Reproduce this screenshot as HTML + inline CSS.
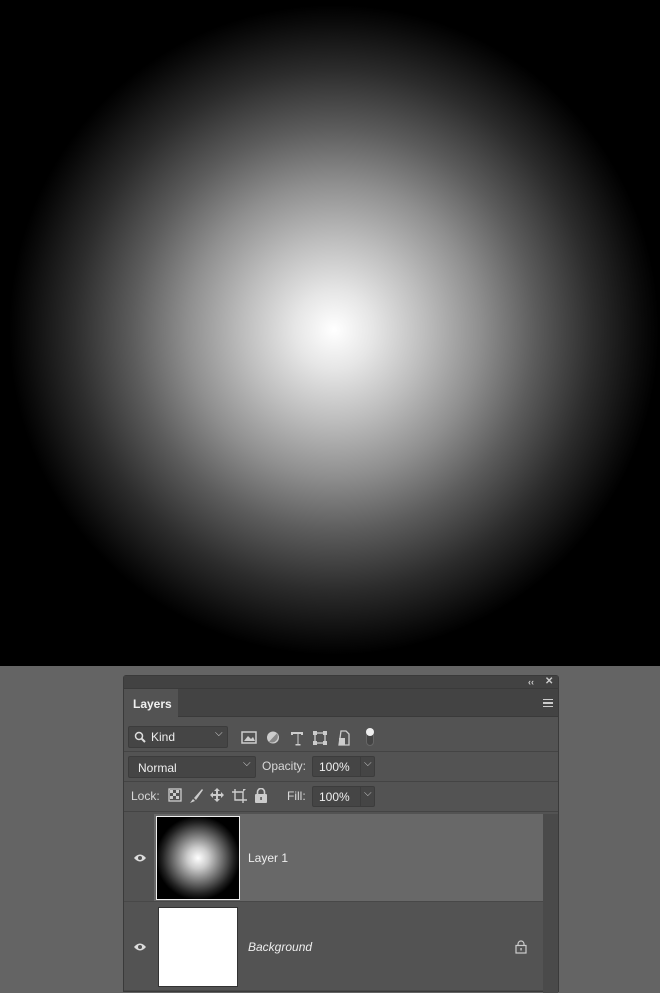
<!DOCTYPE html>
<html><head><meta charset="utf-8"><style>
*{margin:0;padding:0;box-sizing:border-box}
body{width:660px;height:992px;overflow:hidden;background:#646464;font-family:"Liberation Sans",sans-serif;position:relative}
#canvas{position:absolute;left:0;top:0;width:660px;height:666px;background:radial-gradient(circle 325px at 334px 330px,#fff 0,#e6e6e6 12%,#bdbdbd 28%,#8f8f8f 45%,#5c5c5c 62%,#2c2c2c 80%,#0a0a0a 95%,#000 100%)}
#panel{position:absolute;left:123px;top:675px;width:436px;height:317px;background:#535353;border:1px solid #3a3a3a;border-radius:3px 3px 0 0}
.abs{position:absolute}
#top{left:0;top:0;width:434px;height:13px;background:#424242;border-bottom:1px solid #3a3a3a}
#tabrow{left:0;top:13px;width:434px;height:28px;background:#434343;border-bottom:1px solid #3a3a3a}
#tab{left:0;top:13px;width:54px;height:29px;background:#535353;color:#f0f0f0;font-weight:bold;font-size:12px;padding:8px 0 0 9px}
.box{background:#454545;border:1px solid #3c3c3c;border-radius:2px;color:#eee;font-size:12px}
.lbl{color:#d8d8d8;font-size:12px}
.sep{left:0;width:434px;height:1px;background:#444}
.ic{fill:#d0d0d0}
</style></head><body>
<div id="canvas"></div>
<div id="panel">
 <div class="abs" id="top"></div>
 <div class="abs" style="left:404px;top:1px;color:#ccc;font-size:9px;font-weight:bold">‹‹</div>
 <div class="abs" style="left:421px;top:0px;color:#ccc;font-size:10px;font-weight:bold">✕</div>
 <div class="abs" id="tabrow"></div>
 <div class="abs" id="tab">Layers</div>
 <div class="abs" style="left:419px;top:23px;width:10px;height:8px;border-top:1px solid #ccc;border-bottom:1px solid #ccc"><div style="margin-top:2px;border-top:1px solid #ccc;height:2px;border-bottom:1px solid #ccc"></div></div>

 <div class="abs box" style="left:4px;top:50px;width:100px;height:22px;padding:3px 0 0 22px">Kind</div>
 <svg class="abs" style="left:10px;top:55px" width="12" height="12"><circle cx="5" cy="5" r="3.5" stroke="#ddd" stroke-width="1.5" fill="none"/><path d="M7.5 7.5L11 11" stroke="#ddd" stroke-width="2"/></svg>
 <div class="abs lbl" style="left:91px;top:52px;font-size:10px">⌵</div>
 <svg class="abs" style="left:117px;top:53px" width="140" height="20">
  <rect x="1" y="3" width="14" height="11" fill="none" stroke="#ccc" stroke-width="1.5"/><path d="M3 12l4-5 3 3 2-2 2 4z" fill="#ccc"/>
  <circle cx="32" cy="8.5" r="6" fill="#ccc"/><path d="M36 4.3A6 6 0 0 1 28 12.7z" fill="#888"/>
  <path d="M50 3h12v3h-2v-1h-2.5v10h2v1.5h-5V15h2V5H52v1h-2z" fill="#ccc"/>
  <rect x="74" y="4" width="10" height="10" fill="none" stroke="#ccc" stroke-width="1.3"/><rect x="72" y="2" width="4" height="4" fill="#ccc"/><rect x="82" y="2" width="4" height="4" fill="#ccc"/><rect x="72" y="12" width="4" height="4" fill="#ccc"/><rect x="82" y="12" width="4" height="4" fill="#ccc"/>
  <path d="M100 2h5l3 3v11h-10z" fill="none" stroke="#ccc" stroke-width="1.3"/><rect x="98" y="9" width="6" height="7" fill="#ccc"/>
  <rect x="247" y="0" width="0" height="0"/>
 </svg>
 <div class="abs" style="left:242px;top:53px;width:8px;height:17px;border-radius:4px;background:#444;border:1px solid #666"></div>
 <div class="abs" style="left:242px;top:52px;width:8px;height:8px;border-radius:4px;background:#eee"></div>
 <div class="abs sep" style="top:75px"></div>

 <div class="abs box" style="left:4px;top:80px;width:128px;height:22px;padding:4px 0 0 9px">Normal</div>
 <div class="abs lbl" style="left:119px;top:82px;font-size:10px">⌵</div>
 <div class="abs lbl" style="left:138px;top:83px">Opacity:</div>
 <div class="abs box" style="left:188px;top:80px;width:63px;height:21px;padding:3px 0 0 6px">100%<span style="position:absolute;left:47px;top:0;width:1px;height:19px;background:#3c3c3c"></span><span style="position:absolute;left:51px;top:1px;font-size:10px;color:#ccc">⌵</span></div>
 <div class="abs sep" style="top:105px"></div>

 <div class="abs lbl" style="left:7px;top:113px">Lock:</div>
 <svg class="abs" style="left:44px;top:112px" width="106" height="16">
  <rect x="1" y="1" width="12" height="12" fill="none" stroke="#ccc" stroke-width="1.3"/><rect x="2" y="2" width="3" height="3" fill="#ccc"/><rect x="8" y="2" width="3" height="3" fill="#ccc"/><rect x="5" y="5" width="3" height="3" fill="#ccc"/><rect x="2" y="8" width="3" height="3" fill="#ccc"/><rect x="8" y="8" width="3" height="3" fill="#ccc"/>
  <path d="M34 1l-8 9 2 2 7-10z M25 11l2 2-5 2z" fill="#ccc"/>
  <path d="M49 0l3 3h-2v3h3V4l3 3-3 3V8h-3v3h2l-3 3-3-3h2V8h-3v2l-3-3 3-3v2h3V3h-2z" fill="#ccc"/>
  <path d="M67 1v11h12M64 4h11v11" fill="none" stroke="#ccc" stroke-width="1.4"/><path d="M75 1l3 0-3 3z" fill="#ccc"/>
  <rect x="87" y="6" width="12" height="9" rx="1" fill="#ccc"/><path d="M89.5 6V4a3.5 3.5 0 0 1 7 0v2" fill="none" stroke="#ccc" stroke-width="1.6"/><rect x="92.3" y="9" width="1.5" height="3" fill="#535353"/>
 </svg>
 <div class="abs lbl" style="left:163px;top:113px">Fill:</div>
 <div class="abs box" style="left:188px;top:110px;width:63px;height:21px;padding:3px 0 0 6px">100%<span style="position:absolute;left:47px;top:0;width:1px;height:19px;background:#3c3c3c"></span><span style="position:absolute;left:51px;top:1px;font-size:10px;color:#ccc">⌵</span></div>
 <div class="abs" style="left:0;top:135px;width:434px;height:1px;background:#444"></div>

 <!-- layers -->
 <div class="abs" style="left:30px;top:138px;width:389px;height:87px;background:#686868"></div>
 <div class="abs" style="left:0;top:225px;width:419px;height:1px;background:#484848"></div>
 <div class="abs" style="left:419px;top:138px;width:15px;height:179px;background:#4a4a4a"></div>
 <svg class="abs" style="left:9px;top:177px" width="14" height="10"><path d="M1 5Q7 -2 13 5Q7 12 1 5z" fill="#ddd"/><circle cx="7" cy="5" r="2" fill="#535353"/></svg>
 <div class="abs" style="left:32px;top:140px;width:84px;height:84px;border:1px solid #eee;background:radial-gradient(circle 42px at 41px 41px,#fff 0,#ccc 25%,#777 55%,#222 85%,#000 100%)"></div>
 <div class="abs" style="left:54px;top:139px;width:38px;height:86px;border-top:1px solid #686868;border-bottom:1px solid #686868"></div>
 <div class="abs" style="left:124px;top:175px;color:#eee;font-size:12px">Layer 1</div>

 <svg class="abs" style="left:9px;top:266px" width="14" height="10"><path d="M1 5Q7 -2 13 5Q7 12 1 5z" fill="#ddd"/><circle cx="7" cy="5" r="2" fill="#535353"/></svg>
 <div class="abs" style="left:34px;top:231px;width:80px;height:80px;background:#fff;border:1px solid #333"></div>
 <div class="abs" style="left:124px;top:264px;color:#eee;font-size:12px;font-style:italic">Background</div>
 <svg class="abs" style="left:391px;top:264px" width="12" height="14"><rect x="1" y="5.5" width="10" height="7.5" fill="none" stroke="#ccc" stroke-width="1.2"/><path d="M3 5.5V4a3 3 0 0 1 6 0v1.5" fill="none" stroke="#ccc" stroke-width="1.2"/><rect x="5.4" y="8" width="1.3" height="2.5" fill="#ccc"/></svg>
 <div class="abs" style="left:0;top:314px;width:419px;height:1px;background:#484848"></div>
</div>
</body></html>
